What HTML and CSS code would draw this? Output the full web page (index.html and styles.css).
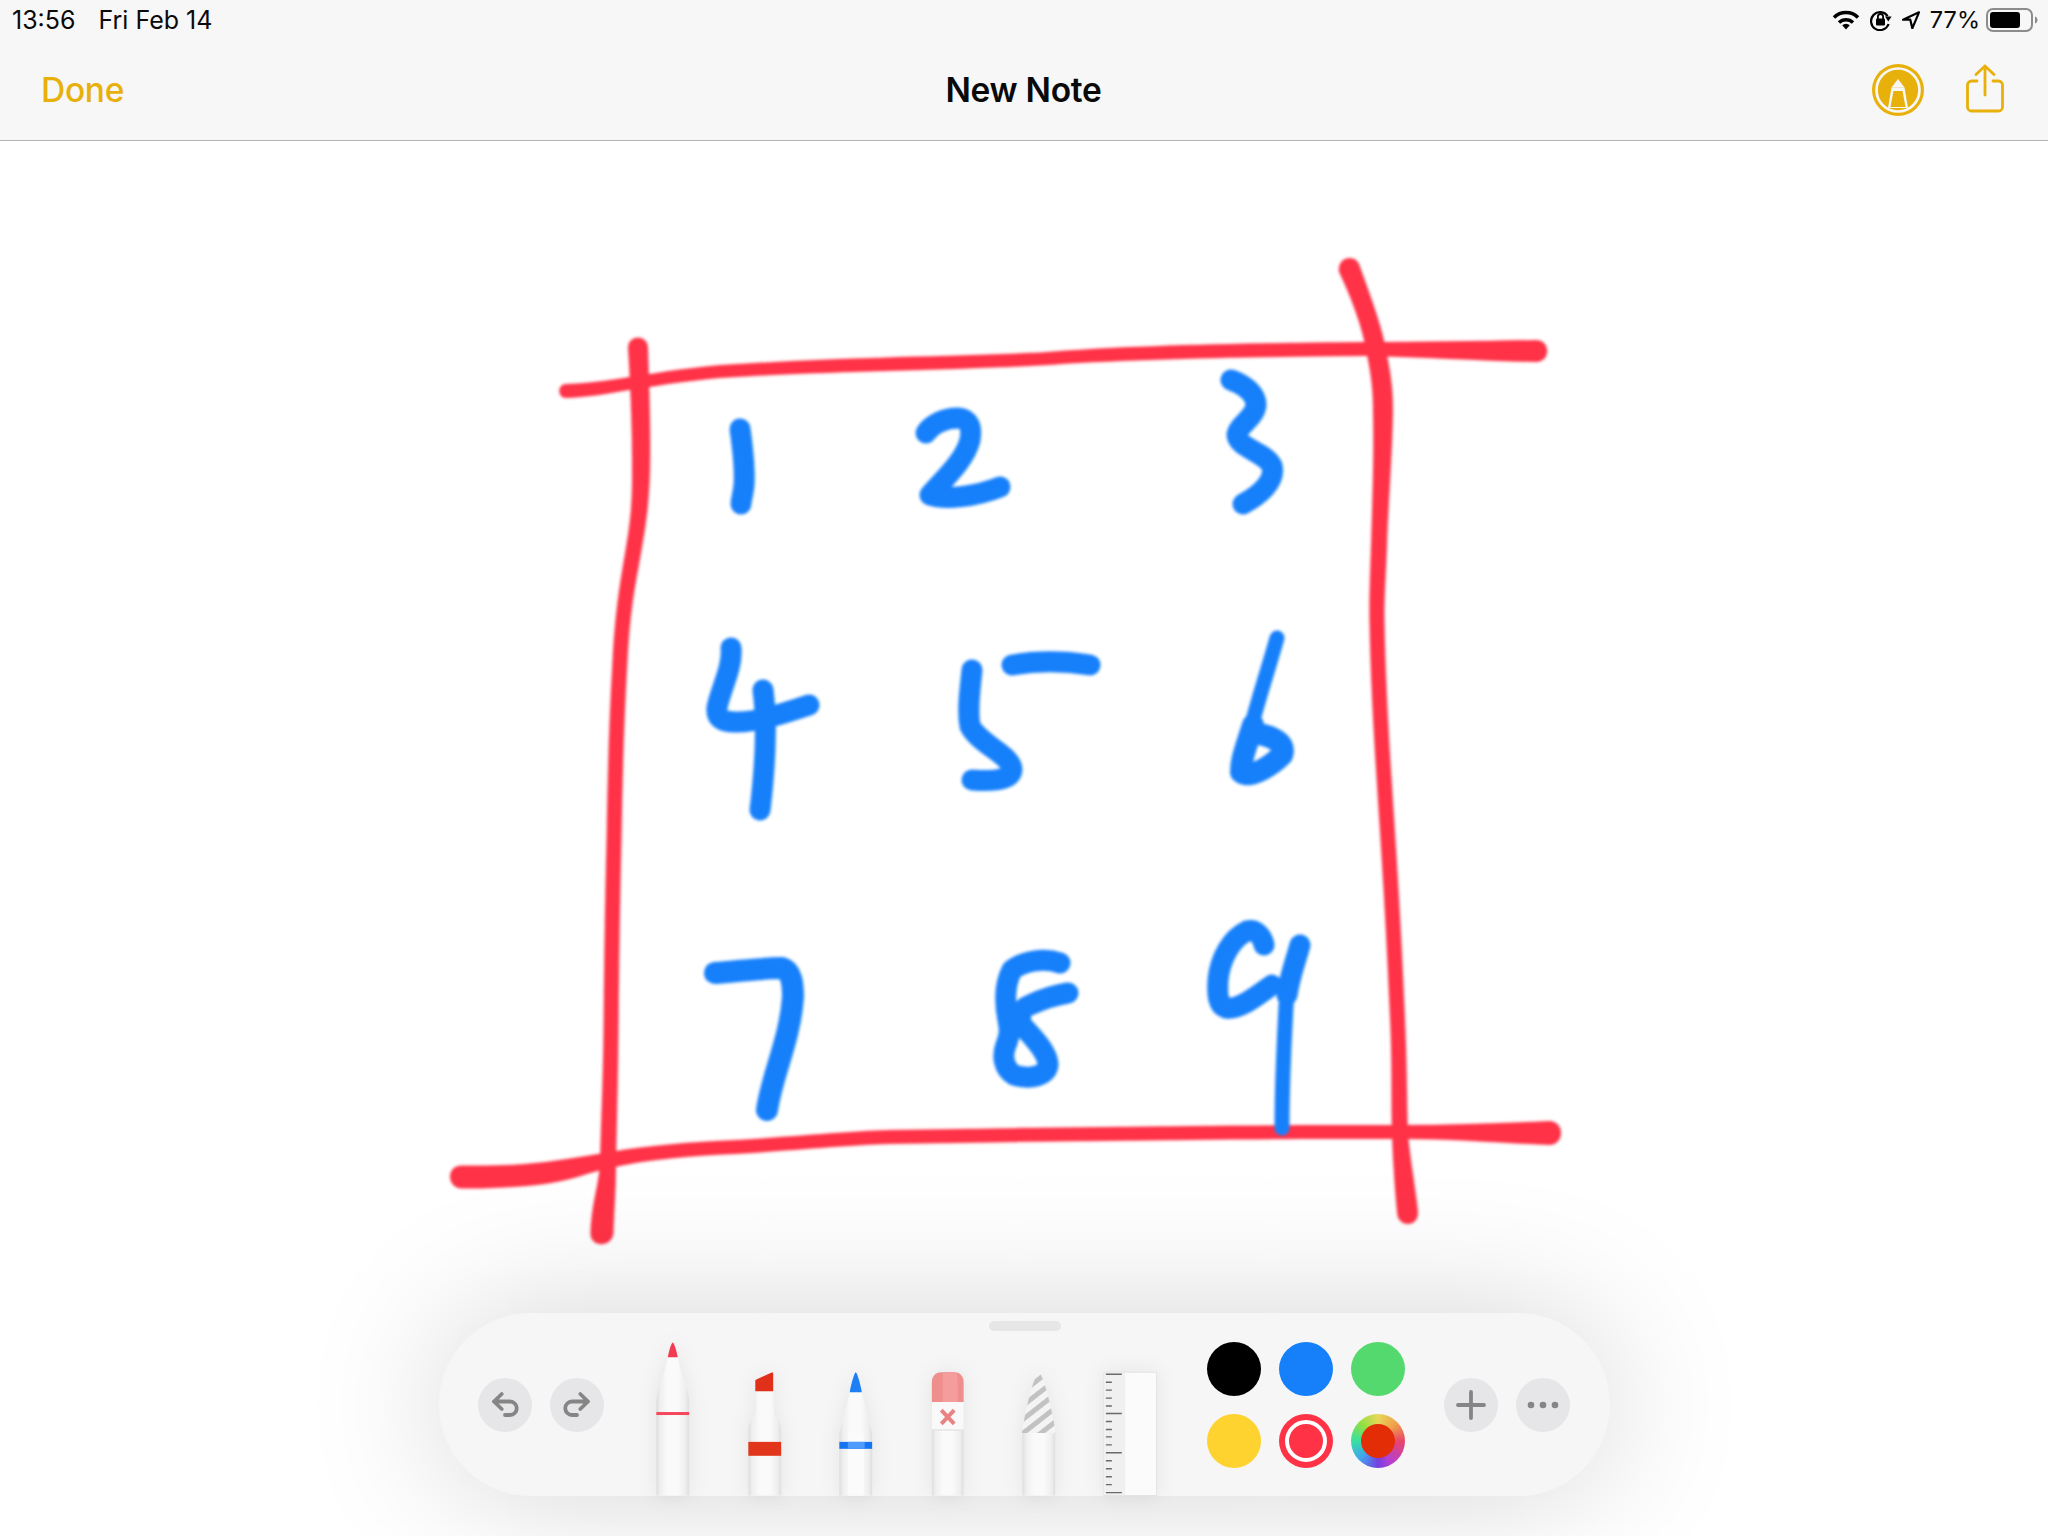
FILE: index.html
```html
<!DOCTYPE html>
<html lang="en">
<head>
<meta charset="utf-8">
<title>New Note</title>
<link rel="stylesheet" href="styles.css">
</head>
<body>
<div class="screen">
  <header class="topbar">
    <div class="status">
      <div class="status-left"><span>13:56</span><span>Fri Feb 14</span></div>
      <div class="status-right">
        <svg class="ic-wifi" viewBox="0 0 28 20"><path d="M2 7.5a17 17 0 0 1 24 0" class="wifi-arc"/><path d="M7 12.5a10 10 0 0 1 14 0" class="wifi-arc"/><path d="M10.2 15.3a5.4 5.4 0 0 1 7.6 0L14 19.6z" class="wifi-fill"/></svg>
        <svg class="ic-lock" viewBox="0 0 22 22"><path d="M17.6 7.2A9 9 0 1 0 18.6 15" class="lock-ring"/><path d="M15 7.6h6.6l-3.3 5z" class="wifi-fill"/><rect x="6" y="9.6" width="9" height="7" rx="1" class="wifi-fill"/><path d="M7.9 10V7.6a2.6 2.6 0 0 1 5.2 0V10" class="lock-shackle"/></svg>
        <svg class="ic-loc" viewBox="0 0 18 18"><path d="M1 8.7 17 1.300 10.300 17.300 8.300 8.700z" class="loc"/></svg>
        <span class="batt-label">77%</span>
        <svg class="ic-batt" viewBox="0 0 52 24"><rect x="1" y="1" width="45" height="22" rx="6" class="batt-shell"/><rect x="4" y="4" width="30" height="16" rx="3" class="wifi-fill"/><path d="M49 8.500c1.800.5 2.500 2 2.500 3.500s-.7 3-2.500 3.500z" class="batt-nub"/></svg>
      </div>
    </div>
    <nav class="nav">
      <a class="nav-done">Done</a>
      <h1 class="nav-title">New Note</h1>
      <div class="nav-actions">
        <svg class="ic-markup" viewBox="-26 -26 52 52"><circle r="26" class="gold"/><circle r="21.500" class="markup-ring"/><path d="M0-11 6.500-2.500H-6.500z" class="white"/><path d="M-10 18-6.500-2.500H6.500L10 18z" class="white"/><path d="M-7.500 17-4.500 1H4.500L7.500 17z" class="gold"/></svg>
        <svg class="ic-share" viewBox="0 0 42 52"><path d="M13 17H7.500a4 4 0 0 0-4 4v22a4 4 0 0 0 4 4h27a4 4 0 0 0 4-4V21a4 4 0 0 0-4-4H29" class="share"/><path d="M21 31V2M12 10.500 21 2l9 8.500" class="share"/></svg>
      </div>
    </nav>
  </header>

  <main class="canvas">
    <svg class="ink" viewBox="0 141 2048 1395">
      <defs><filter id="soft" x="-5%" y="-5%" width="110%" height="110%"><feGaussianBlur stdDeviation="1.800"/></filter></defs>
      <g class="red-fill" filter="url(#soft)">
        <path d="M566 384C595 383 615 379 640 375.500C680 369 710 365 746 363.500C850 357 960 356 1040 352.500C1130 345 1250 343 1364 342C1420 342 1480 341 1536 340C1551 340 1551 362 1536 362C1480 361 1420 357 1364 356C1250 357 1130 359 1040 365.500C960 370 850 371 746 376.500C710 378 680 382 640 388.500C615 392 595 397 566 398C557 398 557 384 566 384Z"/>
        <path d="M462 1165.500C490 1166 520 1165 545 1162C570 1159 590 1155 610 1152C650 1145 690 1142 736 1140C800 1136 850 1131 889 1130C1000 1128 1100 1127 1191 1126C1260 1125 1340 1125 1402 1125C1450 1125 1500 1123 1549 1121C1565 1121 1565 1145 1549 1145C1500 1143 1450 1139 1402 1139C1340 1139 1260 1139 1191 1140C1100 1141 1000 1142 889 1144C850 1145 800 1150 736 1154C690 1156 650 1159 610 1168C590 1172 570 1181 545 1184C520 1187 490 1189 462 1188.500C446 1188 446 1165 462 1165.500Z"/>
        <path d="M628 348C628 334 648 334 648 348C649 380 651 430 650 470C649 510 645 530 639 565C632 600 629 630 627.500 661C624 720 622.500 780 621.500 840C620 900 619 970 618.500 1030C618 1080 617 1120 616 1163C616 1185 615 1200 613.500 1233C612 1248 590 1248 590.500 1233C592 1200 598 1190 600 1163C601 1120 603 1080 603.500 1030C604 970 605 900 606.500 840C607.500 780 609 720 612.500 661C614 630 617 600 623 565C629 530 632.500 510 632 470C632.500 430 630 380 628 348Z"/>
        <path d="M1339 272C1337 256 1355 254 1359 264C1370 295 1382 325 1387 355C1391 375 1393 390 1393 412C1392 460 1388 510 1387 546C1386 575 1384 600 1384.500 623C1386 700 1391 770 1395.500 840C1400 910 1403 970 1405.500 1030C1407 1070 1407 1100 1408 1135C1411 1165 1416 1190 1418 1212C1419 1228 1397 1228 1397 1212C1395 1190 1393 1165 1392 1135C1391 1100 1392 1070 1390.500 1030C1388 970 1385 910 1380.500 840C1376 770 1371 700 1369.500 623C1369 600 1370 575 1371 546C1372 510 1374 460 1373 412C1373 390 1371 375 1367 355C1362 325 1350 295 1339 272Z"/>
      </g>
      <g class="strokes blue" filter="url(#soft)">
        <path class="w20" d="M740 429C743 450 745 470 744 485C743 495 741 500 741 504"/>
        <path class="w20" d="M926 433C932 424 945 418 958 418C970 419 972 428 970 440C965 460 945 478 930 495C945 500 975 497 1000 487"/>
        <path class="w20" d="M1231 380C1245 385 1256 394 1256 405C1255 418 1238 425 1237 435C1238 448 1265 452 1272 466C1276 482 1258 496 1243 504"/>
        <path class="w20" d="M731 648C733 668 720 690 717 708C716 718 722 722 735 722C755 723 785 713 809 705"/>
        <path class="w20" d="M763 690C767 720 766 760 760 810"/>
        <path class="w20" d="M972 670C970 690 967 710 970 726C980 745 1012 755 1012 770C1011 782 985 781 972 780"/>
        <path class="w20" d="M1012 665C1040 660 1065 661 1090 665"/>
        <path class="w15" d="M1277 638C1268 670 1258 700 1249 735"/>
        <path class="w22" d="M1253 725C1245 750 1241 760 1241 772C1250 780 1272 765 1282 755C1287 742 1270 735 1252 733"/>
        <path class="w22" d="M715 973C740 971 765 968 782 968C792 971 793 985 793 997C790 1040 772 1075 767 1110"/>
        <path class="w20" d="M1060 963C1045 958 1025 960 1012 970C1004 985 1005 1005 1008 1020C1010 1030 1010 1035 1006 1045C1002 1055 1003 1068 1014 1075C1030 1080 1048 1076 1048 1064C1047 1050 1030 1035 1022 1025C1018 1015 1022 1008 1030 1005C1045 998 1055 995 1068 993"/>
        <path class="w20" d="M1264 945C1262 935 1255 929 1247 931C1232 938 1220 958 1218 980C1217 995 1218 1005 1226 1008C1240 1010 1258 995 1272 985"/>
        <path class="w20" d="M1300 945C1296 960 1290 975 1287 995"/>
        <path class="w16" d="M1287 990C1284 1040 1282 1085 1282 1128"/>
      </g>
    </svg>

    <section class="toolbar">
      <span class="handle"></span>
      <div class="history">
        <button class="round"><svg viewBox="0 0 54 54"><path class="glyph" d="M16 23.500 23.700 16M16 23.500 23.700 31M16 23.500H32a6.700 6.700 0 0 1 0 13.500H27"/></svg></button>
        <button class="round"><svg viewBox="0 0 54 54"><path class="glyph" d="M38 23.500 30.300 16M38 23.500 30.300 31M38 23.500H22a6.700 6.700 0 0 0 0 13.500H27"/></svg></button>
      </div>

      <div class="tools">
        <svg class="tool" viewBox="0 0 92 154">
          <defs>
            <linearGradient id="body"><stop offset="0" stop-color="#dedede"/><stop offset=".12" stop-color="#efefef"/><stop offset=".35" stop-color="#fafafa"/><stop offset=".65" stop-color="#fafafa"/><stop offset=".88" stop-color="#efefef"/><stop offset="1" stop-color="#dedede"/></linearGradient>
            <pattern id="hatch" width="11" height="11" patternUnits="userSpaceOnUse" patternTransform="rotate(-38)"><rect width="11" height="11" fill="#f4f4f4"/><rect width="11" height="5" fill="#c2c2c2"/></pattern>
          </defs>
          <path class="body" d="M41 15C39 30 30 45 29.500 60V154H62.500V60C62 45 53 30 51 15z"/>
          <path d="M46 0C47.500 0 50.500 11 51 15H41C41.500 11 44.500 0 46 0z" fill="#f23a50"/>
          <rect x="29.500" y="70" width="33" height="3" fill="#f5475a"/>
        </svg>
        <svg class="tool" viewBox="0 0 92 154">
          <path class="body" d="M37 49V68C37 76 29.500 78 29.500 88V154H62.500V88C62.500 78 55 76 55 68V49z"/>
          <path d="M36.500 39C36.500 38 37 37.500 38 37L53 30.300C54 30 54.500 30.500 54.500 31.500V49H36.500z" fill="#e1301a"/>
          <rect x="29.500" y="100" width="33" height="14" fill="#e1361c"/>
        </svg>
        <svg class="tool" viewBox="0 0 92 154">
          <path class="body" d="M40 50 29.500 91V154H62.500V91L52 50z"/>
          <rect x="38" y="91" width="16" height="63" fill="#fbfbfb"/>
          <path d="M46 30C47.500 30 51.500 45 52 50H40C40.500 45 44.500 30 46 30z" fill="#1e7ff5"/>
          <rect x="29.500" y="100" width="33" height="7" fill="#1676f2"/>
          <rect x="38" y="100" width="17" height="7" fill="#4d9bff"/>
        </svg>
        <svg class="tool" viewBox="0 0 92 154">
          <path class="body" d="M30 60H62V154H30z"/>
          <rect x="30" y="60" width="32" height="28" fill="#f9f9f9"/>
          <path d="M30 60V40C30 34 34 30 39 30H53C58 30 62 34 62 40V60z" fill="#ee8f8d"/>
          <path d="M41 30H53C55 30 56 34 56 40V60H41z" fill="#f59c9c"/>
          <path d="M39.500 68 52.500 82M52.500 68 39.500 82" class="x"/>
          <path d="M30 88H62" class="seam"/>
        </svg>
        <svg class="tool" viewBox="0 0 92 154">
          <path class="body" d="M29.500 91V154H62.500V91z"/>
          <path d="M46 30C50 31 59 65 63 91H29C33 65 42 31 46 30z" fill="url(#hatch)"/>
        </svg>
        <svg class="tool" viewBox="0 0 92 154">
          <rect x="19" y="30" width="53" height="124" fill="#fbfbfb" stroke="#e2e2e2"/>
          <rect x="19.500" y="30.500" width="21" height="123" fill="#f0f0f0"/>
          <path class="ticks" d="M21 32H37M21 40H27M21 48H27M21 56H27M21 64H27M21 71.500H37M21 79.500H27M21 87.500H27M21 95H27M21 103H27M21 111H37M21 119H27M21 127H27M21 135H27M21 143H27M21 151H37"/>
        </svg>
      </div>

      <div class="swatches">
        <span class="swatch black"></span>
        <span class="swatch blue-dot"></span>
        <span class="swatch green"></span>
        <span class="swatch yellow"></span>
        <span class="swatch red-dot selected"></span>
        <span class="swatch wheel"><i class="wheel-core"></i></span>
      </div>

      <div class="history">
        <button class="round"><svg viewBox="0 0 54 54"><path class="glyph" d="M14 27H40M27 14V40"/></svg></button>
        <button class="round"><svg viewBox="0 0 54 54"><circle cx="15" cy="27" r="3.300" class="dot"/><circle cx="27" cy="27" r="3.300" class="dot"/><circle cx="39" cy="27" r="3.300" class="dot"/></svg></button>
      </div>
    </section>
  </main>
</div>
</body>
</html>
```

FILE: styles.css
```css
* { box-sizing: border-box; }
html, body { margin: 0; padding: 0; background: #fff; }
body { font-family: Inter, "Liberation Sans", sans-serif; color: #0a0a0a; }

.screen { width: 2048px; height: 1536px; display: flex; flex-direction: column; overflow: hidden; background: #fff; }

/* top bars */
.topbar { height: 141px; background: #f7f7f7; border-bottom: 1px solid #b2b2b2; flex: none; }
.status { height: 40px; display: flex; justify-content: space-between; align-items: center; padding: 0 10px 0 12px; font-size: 25px; line-height: 40px; }
.status-left { display: flex; gap: 23px; }
.status-right { display: flex; align-items: center; gap: 10px; }
.batt-label { font-size: 23.500px; }
.ic-wifi { width: 28px; height: 20px; }
.ic-lock { width: 22px; height: 22px; }
.ic-loc { width: 18px; height: 18px; }
.ic-batt { width: 52px; height: 24px; margin-left: -4px; }
.wifi-arc { fill: none; stroke: #000; stroke-width: 3.500; }
.wifi-fill { fill: #000; }
.lock-ring { fill: none; stroke: #000; stroke-width: 2.200; }
.lock-shackle { fill: none; stroke: #000; stroke-width: 1.800; }
.loc { fill: none; stroke: #000; stroke-width: 2.200; stroke-linejoin: round; }
.batt-shell { fill: none; stroke: #8c8c8c; stroke-width: 2; }
.batt-nub { fill: #8c8c8c; }

.nav { height: 100px; display: grid; grid-template-columns: 1fr auto 1fr; align-items: center; padding: 0 42px 0 41px; }
.nav-done { color: #e8b00a; font-size: 33.500px; font-weight: 500; letter-spacing: -0.300px; }
.nav-title { margin: 0; font-size: 33.500px; font-weight: 600; letter-spacing: -0.300px; color: #0a0a0a; }
.nav-actions { display: flex; justify-content: flex-end; align-items: center; gap: 40px; }
.ic-markup { width: 52px; height: 52px; }
.ic-share { width: 42px; height: 52px; }
.gold { fill: #e8b00a; }
.white { fill: #f7f7f7; }
.markup-ring { fill: none; stroke: #f7f7f7; stroke-width: 2.700; }
.share { fill: none; stroke: #e8b00a; stroke-width: 2.800; stroke-linecap: round; stroke-linejoin: round; }

/* drawing surface */
.canvas { position: relative; flex: 1; min-height: 0; }
.ink { position: absolute; top: 0; left: 0; width: 2048px; height: 1395px; }
.red-fill path { fill: #ff3246; }
.strokes path { fill: none; stroke-linecap: round; stroke-linejoin: round; }
.blue path { stroke: #1680fb; }
.w15 { stroke-width: 15px; }
.w16 { stroke-width: 15px; }
.w20 { stroke-width: 21px; }
.w22 { stroke-width: 22px; }

/* tool palette */
.toolbar { position: absolute; left: 0; right: 0; bottom: 40px; margin: 0 auto; width: 1171px; height: 183px; border-radius: 92px; background: #f6f6f6; box-shadow: 0 0 140px rgba(0, 0, 0, .17); display: flex; align-items: center; padding: 0 38px 0 39px; }
.handle { position: absolute; top: 8px; left: 550px; width: 72px; height: 10px; border-radius: 5px; background: #e6e6e6; }
.history { display: flex; gap: 18px; flex: none; }
.round { width: 54px; height: 54px; padding: 0; border: 0; border-radius: 50%; background: #e6e6e8; display: block; }
.round svg { display: block; width: 54px; height: 54px; }
.glyph { fill: none; stroke: #858585; stroke-width: 3.800; stroke-linecap: round; stroke-linejoin: round; }
.dot { fill: #858585; }

.tools { display: flex; align-self: flex-end; flex: none; margin-left: 23.500px; }
.tool { display: block; width: 91.500px; height: 154px; filter: drop-shadow(0 0 10px rgba(0, 0, 0, .07)); }
.body { fill: url(#body); }
.x { fill: none; stroke: #e98383; stroke-width: 4; }
.seam { stroke: #e4e4e4; stroke-width: 1.500; }
.ticks { fill: none; stroke: #6a6a6a; stroke-width: 1.400; }

.swatches { display: grid; grid-template-columns: repeat(3, 54px); grid-auto-rows: 54px; gap: 18px; flex: none; margin-left: 30.500px; }
.swatch { display: block; border-radius: 50%; position: relative; }
.black { background: #000; }
.blue-dot { background: #1680fb; }
.green { background: #53d96e; }
.yellow { background: #fed22f; }
.red-dot { background: #ff3246; }
.selected::after { content: ""; position: absolute; inset: 6px; border-radius: 50%; border: 4px solid #fff; }
.wheel { background: conic-gradient(#e6d75a, #f0a24a 45deg, #e8456a 90deg, #b53fd2 150deg, #7440e0 180deg, #42a4ee 225deg, #36e0a2 270deg, #90e042 315deg, #e6d75a); }
.wheel-core { position: absolute; inset: 10px; border-radius: 50%; background: #e22d07; }
.swatches + .history { margin-left: 39px; }
```
